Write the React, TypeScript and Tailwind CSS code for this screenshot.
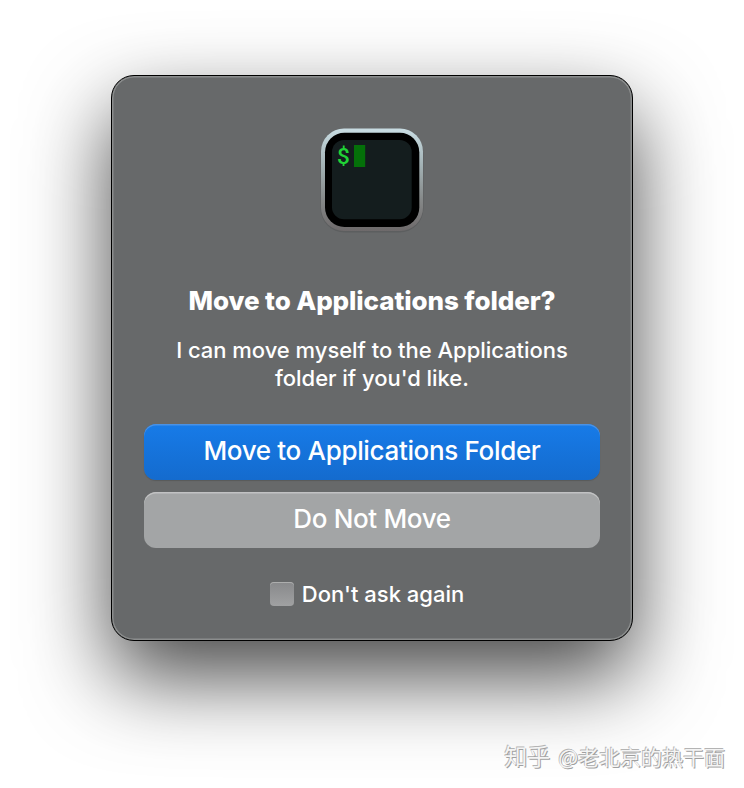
function TerminalIcon() {
  return (
    <svg width="104" height="108" viewBox="0 0 104 108" className="block" aria-hidden="true">
      <defs>
        <linearGradient id="rim" x1="0" y1="0" x2="0" y2="1">
          <stop offset="0" stopColor="#c9dde3" />
          <stop offset="0.35" stopColor="#a4b3b6" />
          <stop offset="0.7" stopColor="#858888" />
          <stop offset="1" stopColor="#6e6a6b" />
        </linearGradient>
      </defs>
      <rect x="0.5" y="1.5" width="103" height="103" rx="24" fill="#000" opacity="0.1" />
      <rect x="1" y="0.5" width="102" height="102.5" rx="23" fill="url(#rim)" />
      <rect x="5" y="4.7" width="94.3" height="94.3" rx="19.5" fill="#000" />
      <rect x="12" y="12" width="79.7" height="79.3" rx="12" fill="#141d1e" />
      <text x="17" y="36" fontFamily="Roboto, sans-serif" fontSize="22.5" fontWeight="500" fill="#20d336">$</text>
      <rect x="34" y="17" width="11.2" height="22" fill="#047009" />
    </svg>
  );
}

export default function App() {
  return (
    <main className="relative flex h-[788px] w-[744px] items-start justify-center overflow-hidden bg-white pt-[75px] font-['Inter',sans-serif] text-white">
      <section className="flex h-[566px] w-[522px] flex-col items-center rounded-[23px] border border-black bg-[#67696a] px-8 pt-[52px] shadow-[inset_0_0_0_1.5px_#8b8d8d,0_36px_84px_rgba(0,0,0,0.72)]">
        <TerminalIcon />
        <h1 className="mt-[49px] h-8 whitespace-nowrap text-[26px] leading-8 font-extrabold tracking-[-0.1px]">
          Move to Applications folder?
        </h1>
        <p className="mt-[19px] text-center text-[22px] leading-7 font-medium tracking-[-0.03px] whitespace-nowrap">
          I can move myself to the Applications
          <br />
          folder if you'd like.
        </p>
        <button className="mt-[32px] h-14 w-[456px] shrink-0 rounded-xl bg-linear-to-b from-[#177be8] to-[#146bce] pb-[3px] text-[26px] font-medium tracking-[-0.34px] shadow-[inset_0_1.5px_0_#4a92e5,0_1px_1px_rgba(0,0,0,0.15)]">
          Move to Applications Folder
        </button>
        <button className="mt-3 h-14 w-[456px] shrink-0 rounded-xl bg-[#a3a5a6] pb-[3px] text-[26px] font-medium tracking-[-0.34px] shadow-[inset_0_1.5px_0_#c1c2c3]">
          Do Not Move
        </button>
        <label className="mt-[32px] mr-[10px] flex h-7 items-center gap-2 text-[22px] font-medium">
          <span className="h-6 w-6 rounded-[4px] bg-linear-to-b from-[#88898b] to-[#a0a1a2] shadow-[inset_0_1px_0_#adaeae]" />
          <span className="whitespace-nowrap">Don't ask again</span>
        </label>
      </section>
      <footer className="absolute top-[739px] right-[19px] flex items-baseline gap-2 text-[21px] leading-8 whitespace-nowrap text-[#f4f4f4] font-['Noto_Sans_CJK_SC',sans-serif] [text-shadow:1px_1px_0_#a0a0a0,-0.7px_-0.7px_0_#b4b4b4]">
        <span className="text-[23px]">知乎</span>
        <span>@老北京的热干面</span>
      </footer>
    </main>
  );
}
